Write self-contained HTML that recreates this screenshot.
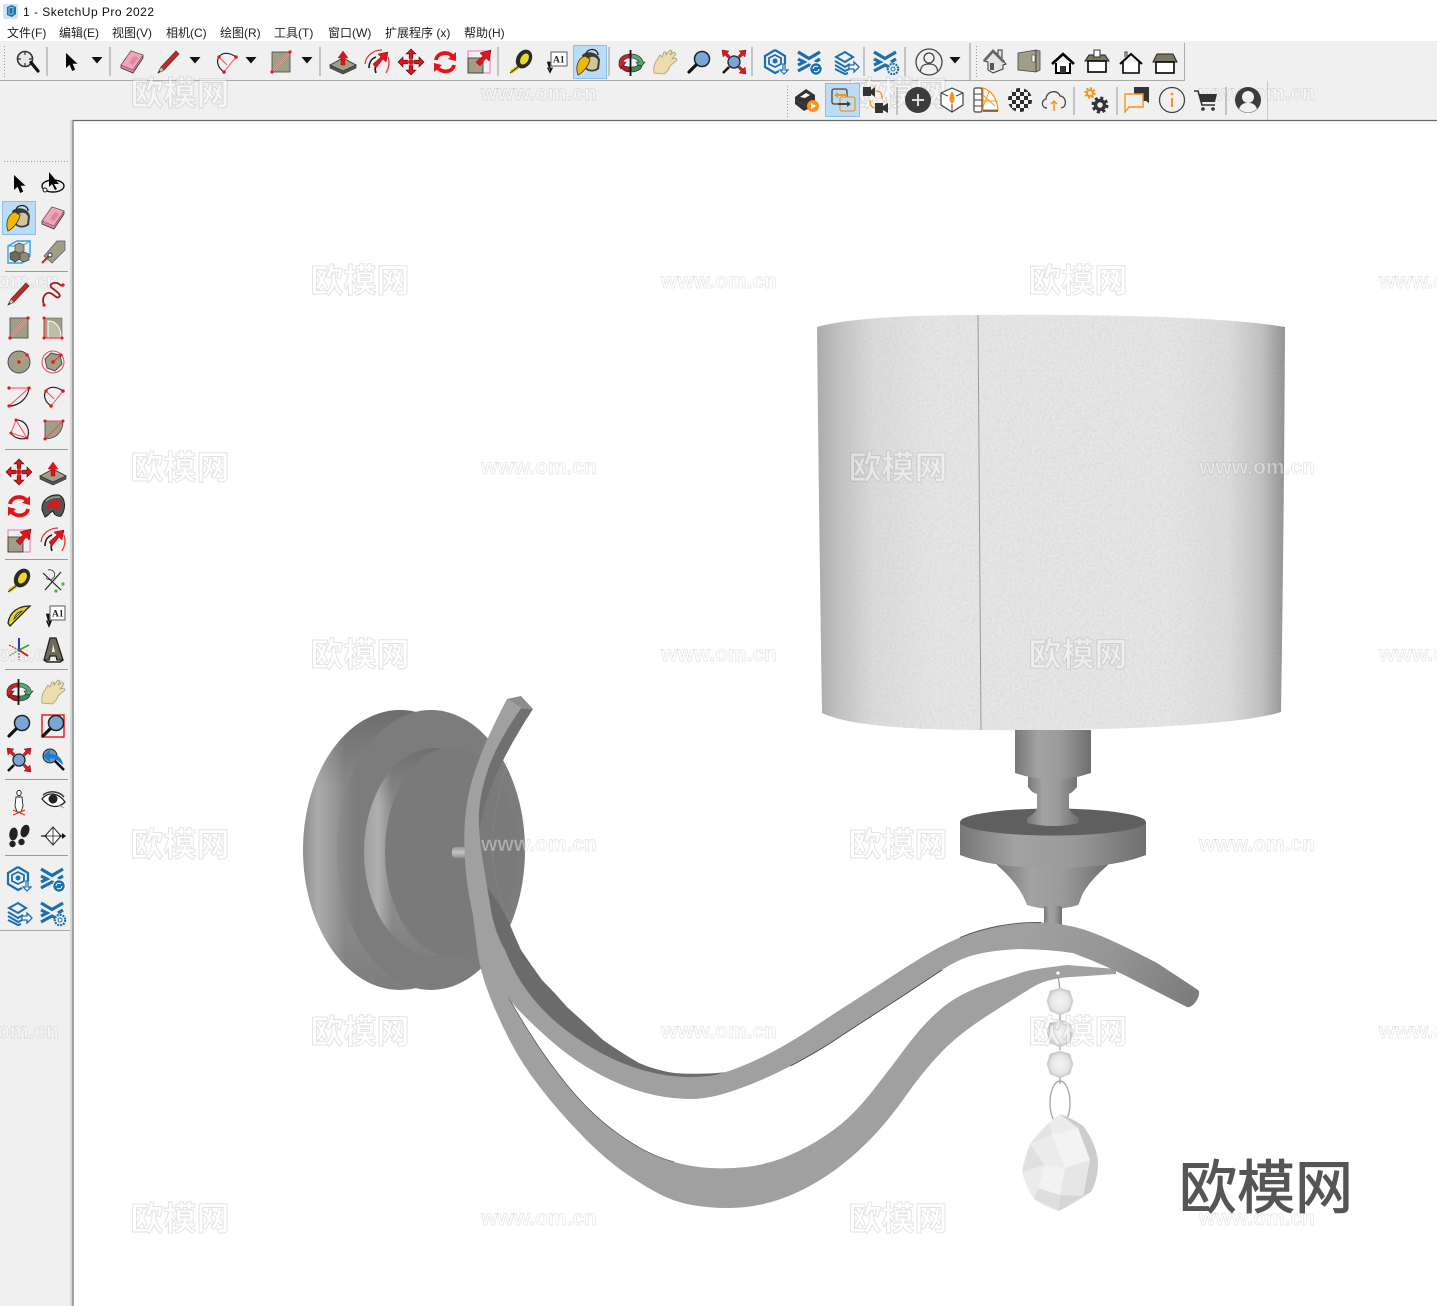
<!DOCTYPE html>
<html lang="zh-CN">
<head>
<meta charset="utf-8">
<title>1 - SketchUp Pro 2022</title>
<style>
html,body{margin:0;padding:0;background:#fff;width:1437px;height:1306px;overflow:hidden}
svg{display:block}
.menu{font:12px "Liberation Sans","Noto Sans CJK SC",sans-serif;fill:#222}
.wc{font:700 33px "Liberation Sans","Noto Sans CJK SC",sans-serif;fill:rgba(255,255,255,.4);stroke:rgba(0,0,0,.11);stroke-width:1;text-anchor:middle}
.we{font:700 21px "Liberation Sans",sans-serif;fill:rgba(255,255,255,.4);stroke:rgba(0,0,0,.09);stroke-width:.9;text-anchor:middle}
</style>
</head>
<body>
<svg xmlns="http://www.w3.org/2000/svg" width="1437" height="1306" viewBox="0 0 1437 1306">
<defs>
<linearGradient id="shade" gradientUnits="userSpaceOnUse" x1="817" x2="1285" y1="0" y2="0">
<stop offset="0" stop-color="#a9a9a9"/><stop offset=".05" stop-color="#c2c2c2"/><stop offset=".12" stop-color="#dbdbdb"/><stop offset=".25" stop-color="#e6e6e6"/><stop offset=".75" stop-color="#e6e6e6"/><stop offset=".88" stop-color="#dcdcdc"/><stop offset=".95" stop-color="#c0c0c0"/><stop offset="1" stop-color="#8f8f8f"/>
</linearGradient>
<filter id="noise" x="0" y="0" width="100%" height="100%">
<feTurbulence type="fractalNoise" baseFrequency="0.4" numOctaves="2" seed="4"/>
<feColorMatrix values="0 0 0 0 .5 0 0 0 0 .5 0 0 0 0 .5 .5 0 0 0 -.17"/>
<feComposite in2="SourceAlpha" operator="in"/>
</filter>
<pattern id="chk" patternUnits="userSpaceOnUse" width="8" height="8" x="-12" y="-12"><rect width="8" height="8" fill="#f4f4f4"/><rect width="4" height="4" fill="#2e2e2e"/><rect x="4" y="4" width="4" height="4" fill="#2e2e2e"/></pattern>
<linearGradient id="cyl" gradientUnits="objectBoundingBox" x1="0" x2="1" y1="0" y2="0">
<stop offset="0" stop-color="#777"/><stop offset=".3" stop-color="#a2a2a2"/><stop offset=".6" stop-color="#9a9a9a"/><stop offset="1" stop-color="#6f6f6f"/>
</linearGradient>
<linearGradient id="band" gradientUnits="userSpaceOnUse" x1="303" x2="345" y1="0" y2="0">
<stop offset="0" stop-color="#8e8e8e"/><stop offset=".35" stop-color="#ababab"/><stop offset=".7" stop-color="#9a9a9a"/><stop offset="1" stop-color="#888"/>
</linearGradient>
<linearGradient id="front" gradientUnits="userSpaceOnUse" x1="337" x2="355" y1="0" y2="0">
<stop offset="0" stop-color="#8e8e8e"/><stop offset="1" stop-color="#7c7c7c"/>
</linearGradient>
<linearGradient id="bandv" x1="0" x2="0" y1="0" y2="1">
<stop offset="0" stop-color="#000" stop-opacity=".2"/><stop offset=".28" stop-color="#000" stop-opacity="0"/><stop offset=".8" stop-color="#000" stop-opacity="0"/><stop offset="1" stop-color="#000" stop-opacity=".08"/>
</linearGradient>
<linearGradient id="ring" gradientUnits="userSpaceOnUse" x1="364" x2="392" y1="0" y2="0">
<stop offset="0" stop-color="#a0a0a0"/><stop offset=".5" stop-color="#b0b0b0"/><stop offset="1" stop-color="#8a8a8a"/>
</linearGradient>
<linearGradient id="armr" gradientUnits="userSpaceOnUse" x1="1030" y1="925" x2="1180" y2="1010">
<stop offset="0" stop-color="#a0a0a0"/><stop offset=".5" stop-color="#959595"/><stop offset="1" stop-color="#7d7d7d"/>
</linearGradient>
<linearGradient id="stub" x1="0" x2="0" y1="0" y2="1"><stop offset="0" stop-color="#9a9a9a"/><stop offset=".5" stop-color="#c4c4c4"/><stop offset="1" stop-color="#8e8e8e"/></linearGradient>
<radialGradient id="bead"><stop offset="0" stop-color="#f4f4f4"/><stop offset=".7" stop-color="#e6e6e6"/><stop offset="1" stop-color="#c4c4c4"/></radialGradient>

<g id="mg"><circle cx="-3" cy="-3" r="7.5" fill="#e8e8e8" stroke="#333" stroke-width="1.6"/><path d="M-3-11v4M-3 1v4M-11-3h4M1-3h4" stroke="#333" stroke-width="1.2"/><path d="M3-.5 L10 8" transform="translate(0,1)" stroke="#111" stroke-width="3.2" stroke-linecap="round"/></g>
<g id="sel"><path d="M-5-9V6l3.6-3.2L1.2 9l3-1.4-2.6-5.8H6.5z" fill="#050505"/></g>
<g id="ers"><path d="M-11 3 L-1-11 L11-7 L11-4 L1 11 L-11 6Z" fill="#ee7e9c" stroke="#333" stroke-width=".8"/><path d="M-11 3 L-1-11 L11-7 L1 8Z" fill="#f4a3b9" stroke="#555" stroke-width=".6"/><path d="M-3 1L2-6 6-4 1 3Z" fill="#d9899f"/></g>
<g id="pen"><path d="M-11 11 L-8 5 L7-11 L10-8 L-5 8Z" fill="#c9252b" stroke="#432" stroke-width=".7"/><path d="M-11 11 L-8 5 L-5 8Z" fill="#d5c49a" stroke="#432" stroke-width=".5"/><path d="M-11 11 L-10 8.500 L-8.500 10Z" fill="#222"/></g>
<g id="dd"><path d="M-5.5-3H5.5L0 3.5Z" fill="#111"/></g>
<g id="arc"><path d="M-2 10 C-16 0-5-16 10-5" fill="none" stroke="#222" stroke-width="1.2"/><path d="M-2 10 L10-5 M-7-5 L1 3" stroke="#f24a5a" fill="none"/><circle cx="-2" cy="10" r="1.8" fill="#e11"/><circle cx="10" cy="-5" r="1.8" fill="#e11"/><circle cx="-7" cy="-5" r="1.6" fill="#e11"/></g>
<g id="rc"><rect x="-9" y="-10" width="18" height="20" fill="#a19e88" stroke="#444" stroke-width=".8"/><path d="M-9 10 L9-10" stroke="#fff" stroke-width="1.6"/><path d="M-9 10 L9-10" stroke="#e22" stroke-width=".9"/><circle cx="-9" cy="10" r="1.6" fill="#e11"/><circle cx="9" cy="-10" r="1.6" fill="#e11"/></g>
<g id="pp"><path d="M-13 4 L0-3 L13 4 L0 10Z" fill="#a19e88" stroke="#333" stroke-width=".9"/><path d="M-13 4v3l13 6 13-6v-3l-13 6Z" fill="#555" stroke="#333" stroke-width=".6"/><path d="M-2 4V-3H-5L0-10 5-3H2V4Z" fill="#e5111b" stroke="#800" stroke-width=".4"/></g>
<g id="fol"><path d="M-12 2C-11-7-3-12 5-12" fill="none" stroke="#e33" stroke-width="1.3"/><path d="M11-5C13 1 12 6 9 11" fill="none" stroke="#e33" stroke-width="1.3"/><path d="M-8 6C-8-1-4-4-1-5M-1 11C-3 6-1 2 1 0" fill="none" stroke="#222" stroke-width="1.700"/><path d="M-4 2L4-5 1-8 11-10 9 0 6-3-1 6Z" fill="#e5111b" stroke="#800" stroke-width=".5"/></g>
<g id="mv"><g id="mv1"><path d="M0-13L5-8H1.800V-3.500H-1.800V-8H-5Z" fill="#e5111b" stroke="#311" stroke-width=".6"/></g><use href="#mv1" transform="rotate(90)"/><use href="#mv1" transform="rotate(180)"/><use href="#mv1" transform="rotate(270)"/><circle r="3" fill="#e5111b"/></g>
<g id="rot"><path d="M-9-2C-8-9 3-12 8-5" fill="none" stroke="#e5111b" stroke-width="3.8"/><path d="M11-10 L11-1 L3-3Z" fill="#e5111b"/><path d="M9 3C8 10-3 12-8 5" fill="none" stroke="#e5111b" stroke-width="3.8"/><path d="M-11 10 L-11 1 L-3 3Z" fill="#e5111b"/></g>
<g id="scl"><rect x="-11" y="-11" width="22" height="22" fill="none" stroke="#f08" stroke-opacity=".55"/><rect x="-11" y="-4" width="15" height="15" fill="#a19e88" stroke="#333" stroke-width=".8"/><path d="M-3 0L4-6 1-9 12-12 10-1 7-4 1 4Z" fill="#e5111b" stroke="#600" stroke-width=".5"/></g>
<g id="tape"><path d="M-10 10L-3 5" stroke="#d8c52a" stroke-width="3.8"/><path d="M-11 11L-3 5" stroke="#222" stroke-width=".8"/><ellipse cx="3" cy="-3" rx="7.500" ry="10" transform="rotate(30 3 -3)" fill="#2a2a2a"/><ellipse cx="3.500" cy="-3" rx="3.800" ry="6" transform="rotate(30 3.500 -3)" fill="#ecd927"/></g>
<g id="pnt"><path d="M-7-8C-1-13 9-11 11-3L10 6C5 10-2 9-4 5Z" fill="#3c3c36"/><path d="M-2-3C1-8 8-7 9-2L8 5C4 8-1 7-3 4Z" fill="#cfc59a"/><path d="M-4-7C-11-5-14 4-11 12-5 9 0 2 1-4Z" fill="#f0b800" stroke="#333" stroke-width=".8"/><path d="M-3-9A6 5 0 0 1 9-8" fill="none" stroke="#222" stroke-width="1.300"/></g>
<g id="orb"><path d="M-12 0C-12-6-6-9-1-9V-5C-5-5-8-3-8-1L-5-1-10 6-12 3Z" fill="#c9252b" stroke="#222" stroke-width=".6"/><path d="M-10 4C-8 8-4 9-1 9V4C-4 4-7 3-8 2Z" fill="#b01e23" stroke="#222" stroke-width=".6"/><path d="M0-9C6-9 11-6 12-1L14-1 9 5 5-1 8-1C7-3 4-5 0-5Z" fill="#58a872" stroke="#222" stroke-width=".6"/><path d="M0 9C5 9 10 7 11 3L7 2C5 4 3 4 0 4Z" fill="#3d8a58" stroke="#222" stroke-width=".6"/><path d="M-.5-13V13" stroke="#111" stroke-width="1.800"/></g>
<g id="pan"><path d="M-11 11C-12 5-10 0-8-2L-5-7 -3-5-1-10 1-10 1-7 5-12 7-11 5-7 9-10 11-8 7-3 11-4 12-2 5 4C4 8 2 10-1 12Z" fill="#eddcae" stroke="#a89a70" stroke-width=".8"/></g>
<g id="lens"><circle cx="3" cy="-3" r="7.5" fill="#7aa6d6" stroke="#222" stroke-width="1.5"/><path d="M-3 3L-10 10" stroke="#111" stroke-width="3.2" stroke-linecap="round"/></g>
<g id="ext"><path d="M-5 5L-11 11" stroke="#111" stroke-width="2.6"/><circle cx="0" cy="0" r="6" fill="#7aa6d6" stroke="#222" stroke-width="1.3"/><path d="M-12-12L-5-11-7-9-4-6-6-4-9-7-11-5Z M12-12L5-11 7-9 4-6 6-4 9-7 11-5Z M12 12L5 11 7 9 4 6 6 4 9 7 11 5Z" fill="#e5111b" stroke="#411" stroke-width=".4"/></g>
<g id="b1" fill="none" stroke="#1a6fb0" stroke-width="2.200"><path d="M-1-12L9-6V2M-1-12L-11-6V5L-1 11 3 9"/><path d="M-1-7L5-4V2L-1 5-7 2V-4Z" stroke-width="1.800"/><circle cx="-1" cy="-1" r="1.400"/><path d="M7 2V8H4L8 12 12 8H9V2Z" fill="#fff" stroke-width="1.200"/></g>
<g id="b2"><path d="M-12-10L-1-3.500 10-10M-12 9L-1 3 5 6M-12-3L-6 0-12 3M10-3L5 0" fill="none" stroke="#1a6fb0" stroke-width="3.200"/></g>
<g id="b2c"><use href="#b2"/><circle cx="6" cy="7" r="6.200" fill="#1a6fb0" stroke="#fff" stroke-width="1"/><path d="M3 7A3 3 0 0 1 8 5M9 7A3 3 0 0 1 4 9" fill="none" stroke="#fff"/></g>
<g id="b2g"><use href="#b2"/><circle cx="7" cy="7" r="5.200" fill="#f0f0f0" stroke="#1a6fb0" stroke-width="2.200" stroke-dasharray="2 1"/><circle cx="7" cy="7" r="2" fill="none" stroke="#1a6fb0"/></g>
<g id="b3"><path d="M-10-5L-1-10 7-5-1 0Z" fill="none" stroke="#1a6fb0" stroke-width="2"/><path d="M-11-1L-1 5 4 2M-11 3L-1 9 3 7M-11 7L-1 12 2 11" fill="none" stroke="#1a6fb0" stroke-width="2"/><path d="M3 3H8V0L13 5 8 10V7H3Z" fill="#fff" stroke="#1a6fb0" stroke-width="1.300"/></g>
<g id="usr"><circle r="13" fill="none" stroke="#444" stroke-width="1.3"/><circle cy="-4" r="5" fill="none" stroke="#444" stroke-width="1.3"/><path d="M-8.5 9C-8 3-4 2 0 2S8 3 8.5 9" fill="none" stroke="#444" stroke-width="1.3"/></g>
<g id="h1"><path d="M-11 0L-2-10 3-7V-11H7V-1L11 3 8 4V8L-2 12-7 9V1Z" fill="#e4e4e4" stroke="#333" stroke-width="1"/><path d="M-11 0L-2-10 9 1" fill="none" stroke="#666" stroke-width="2.800"/><rect x="-5" y="2" width="4" height="7" fill="#555"/></g>
<g id="h2"><path d="M-11-8L7-11 11-10V9L7 11-11 9Z" fill="#a19e88" stroke="#444" stroke-width=".8"/><path d="M7-11V11" stroke="#444"/><rect x="3" y="-6" width="3" height="7" fill="#fff" stroke="#444" stroke-width=".6"/></g>
<g id="h3"><path d="M-11 1L0-9 11 1" fill="none" stroke="#000" stroke-width="2.6"/><path d="M-7 0V10H7V0" fill="#fff" stroke="#000" stroke-width="2"/><rect x="-3" y="3" width="6" height="7" fill="#333"/></g>
<g id="h4"><path d="M-12-1L-8-7H8L12-1Z" fill="#7a7763" stroke="#222" stroke-width="1"/><rect x="-9" y="-1" width="18" height="11" fill="#fff" stroke="#000" stroke-width="1.6"/><rect x="-3" y="-12" width="6" height="7" fill="#fff" stroke="#333"/></g>
<g id="h5"><path d="M-11 1L0-9 11 1" fill="none" stroke="#000" stroke-width="2"/><path d="M-8-1V10H8V-1" fill="#fff" stroke="#000" stroke-width="1.6"/><path d="M-6-6V-11H-4V-6" stroke="#333" fill="none"/></g>
<g id="h6"><path d="M-12-1L-8-9H8L12-1Z" fill="#7a7763" stroke="#222" stroke-width="1"/><rect x="-9" y="-1" width="18" height="11" fill="#fff" stroke="#000" stroke-width="1.6"/></g>
<g id="r1"><path d="M-12-3L-1-11 8-5 8 1-1 6-12 0Z" fill="#333"/><path d="M-7-3L-1-7 3-5-2-2Z" fill="#fff"/><path d="M-12 0V4L-3 11 1 9V3L-1 6Z" fill="#333"/><circle cx="6" cy="6" r="6" fill="#f7931e"/><path d="M4 3L9 6 4 9Z" fill="#fff"/></g>
<g id="r2" fill="none" stroke-width="1.300"><rect x="-11" y="-11" width="15" height="15" rx="2" stroke="#444"/><rect x="-3" y="-3" width="15" height="14" rx="2" stroke="#f7931e" fill="#bcdcf5"/><path d="M-9-5L-5-8V-6H4V-4H-5V-2Z" fill="#f7931e" stroke="none"/><path d="M8 4L4 1V3H-5V5H4V7Z" fill="#444" stroke="none"/></g>
<g id="r3"><path d="M-13-13H-5V-10L-1-13V-3L-5-6V-4H-13Z" fill="#333"/><path d="M-1 3H7V6L12 3V13L7 10V13H-1Z" fill="#333"/><path d="M0-9C5-9 6-6 6-1M-6 0C-6 5-5 7-1 8" fill="none" stroke="#f7931e" stroke-width="1.300"/></g>
<g id="r4"><circle r="13" fill="#3c3c3c"/><path d="M0-6V6M-6 0H6" stroke="#ddd" stroke-width="2"/></g>
<g id="r5"><path d="M0-12L11-7V5L0 12-11 5V-7Z" fill="#fff" stroke="#444" stroke-width="1.200"/><path d="M0 4C-4 0-3-4 0-9 3-4 4 0 0 4Z" fill="#f7931e"/><path d="M-11-7L-4-4M11-7L4-4M0 4V12" stroke="#444"/></g>
<g id="r6"><rect x="-12" y="-12" width="8" height="24" rx="1.500" fill="#fff" stroke="#444" stroke-width="1.200"/><path d="M-12-6H-4M-12 0H-4M-12 6H-4" stroke="#444"/><path d="M-3-12C6-9 11-2 12 10H-3Z" fill="#fff" stroke="#f7931e" stroke-width="1.200"/><path d="M-3-5L9 6M3-8L-3 7M-3 1L11 1" stroke="#f7931e"/><path d="M-3 11H12" stroke="#444" stroke-width="1.400"/></g>
<g id="r7"><circle r="12" fill="url(#chk)"/></g>
<g id="r8"><path d="M-7 8C-13 8-13 0-8-1-8-9 4-11 6-4 12-4 14 7 7 8" fill="none" stroke="#444" stroke-width="1.300"/><path d="M0 11V1M-3 4L0 1 3 4" fill="none" stroke="#f7931e" stroke-width="1.500"/></g>
<g id="r9"><circle cx="-6" cy="-7" r="4.500" fill="none" stroke="#f7931e" stroke-width="2.500" stroke-dasharray="2 1.500"/><circle cx="-6" cy="-7" r="3" fill="none" stroke="#f7931e" stroke-width="2"/><circle cx="4" cy="5" r="7" fill="none" stroke="#333" stroke-width="3" stroke-dasharray="3 2.500"/><circle cx="4" cy="5" r="4.500" fill="none" stroke="#333" stroke-width="3.500"/></g>
<g id="r10"><path d="M-3-14H12V2L9 0H-3Z" fill="#333"/><path d="M-12-7H6V6H-8L-12 11Z" fill="#f0f0f0" stroke="#f7931e" stroke-width="1.400"/></g>
<g id="r11"><circle r="12.500" fill="none" stroke="#444" stroke-width="1.300"/><path d="M0-2V7" stroke="#f7931e" stroke-width="2"/><circle cy="-6" r="1.400" fill="#f7931e"/></g>
<g id="r12"><path d="M-12-9H-8L-4 5H9" fill="none" stroke="#333" stroke-width="1.600"/><path d="M-7-6H11L9 2H-5Z" fill="#333"/><circle cx="-3" cy="9" r="1.800" fill="#333"/><circle cx="7" cy="9" r="1.800" fill="#333"/></g>
<g id="r13"><circle r="13" fill="#3c3c3c"/><circle cy="-3" r="6" fill="#f0f0f0"/><path d="M-9 9C-7 3-3 3 0 3S7 3 9 9A13 13 0 0 1-9 9Z" fill="#f0f0f0"/></g>

<g id="os"><ellipse cy="3" rx="11" ry="6" fill="none" stroke="#111" stroke-width="1.400"/><circle cx="-8" cy="7" r="2" fill="#fff" stroke="#111"/><path d="M-4-11V4l3-3 3 6 2-1-3-5H6Z" fill="#050505"/></g>
<g id="cmp"><path d="M-11-6L-2-11H11V4L3 11H-11Z" fill="none" stroke="#2aa4ee" stroke-width="1.400"/><path d="M-11-6H3V11M3-6L11-11" fill="none" stroke="#2aa4ee"/><path d="M-9 1L-4-1 1 1V7L-4 10-9 7Z" fill="#6d6a58" stroke="#333" stroke-width=".6"/><path d="M1 2L5 0 10 2V8L5 10 1 8Z" fill="#8e8b74" stroke="#333" stroke-width=".6"/><path d="M-4-7L0-9 5-7V-1L0 1-4-1Z" fill="#a19e88" stroke="#333" stroke-width=".6"/></g>
<g id="tag"><path d="M-9 4L4-11 12-11 12-2-1 11Z" fill="#a19e88" stroke="#555" stroke-width=".7"/><path d="M-11 11L-3 3" stroke="#c9252b" stroke-width="2"/><circle cx="-3" cy="3" r="2" fill="#fff" stroke="#333"/></g>
<g id="fh"><path d="M-9 11C-12 3-7-2-3-1S3 5 6 3 3-3-1-6 0-12 4-11 7-7 10-9" fill="none" stroke="#9d1d22" stroke-width="1.800"/><circle cx="-9" cy="11" r="1.600" fill="#e11"/><circle cx="10" cy="-9" r="1.600" fill="#e11"/></g>
<g id="rr"><path d="M-9-10H9V10H-9Z" fill="#a19e88" stroke="#555" stroke-width=".5"/><path d="M-5-7C3-7 8-1 8 10H-5Z" fill="#c0bda6" stroke="#fff"/><path d="M-9-10V10H9" fill="none" stroke="#e22"/><circle cx="-9" cy="-10" r="1.500" fill="#e11"/><circle cx="-9" cy="10" r="1.500" fill="#e11"/><circle cx="9" cy="10" r="1.500" fill="#e11"/></g>
<g id="cir"><circle r="11" fill="#a19e88" stroke="#444" stroke-width=".9"/><path d="M0 0L8-7" stroke="#fff" stroke-width="1.300"/><path d="M0 0L8-7" stroke="#e22" stroke-width=".7"/><circle r="1.700" fill="#e11"/><circle cx="8" cy="-7" r="1.600" fill="#e11"/></g>
<g id="pol"><circle r="11" fill="none" stroke="#ee4454" stroke-width="1"/><path d="M-8-3L-2-9 7-7 9 2 2 9-6 6Z" fill="#a19e88" stroke="#444" stroke-width=".9"/><path d="M0 0L8-7" stroke="#e22"/><circle r="1.700" fill="#e11"/><circle cx="8" cy="-7" r="1.600" fill="#e11"/></g>
<g id="a1"><path d="M-10-8H10L-10 10" fill="none" stroke="#f46"/><path d="M-10 10C0 10 9 2 10-8" fill="none" stroke="#222" stroke-width="1.200"/><circle cx="-10" cy="-8" r="1.600" fill="#e11"/><circle cx="10" cy="-8" r="1.600" fill="#e11"/><circle cx="-10" cy="10" r="1.600" fill="#e11"/></g>
<g id="a3"><path d="M-3-10C8-10 12 2 8 8" fill="none" stroke="#222" stroke-width="1.200"/><path d="M-8 3C-5 8 2 10 8 8" fill="none" stroke="#222" stroke-width="1.200"/><path d="M-8 3L8 8 -3-10Z" fill="none" stroke="#f46"/><circle cx="-3" cy="-10" r="1.500" fill="#e11"/><circle cx="-8" cy="3" r="1.500" fill="#e11"/><circle cx="8" cy="8" r="1.500" fill="#e11"/></g>
<g id="pie"><path d="M-8 9V-9H10C10 2 3 9-8 9Z" fill="#a19e88" stroke="#333" stroke-width=".7"/><path d="M-8 9L10-9H-8" fill="none" stroke="#f46"/><circle cx="-8" cy="9" r="1.500" fill="#e11"/><circle cx="10" cy="-9" r="1.500" fill="#e11"/><circle cx="-8" cy="-9" r="1.500" fill="#e11"/></g>
<g id="off"><path d="M-11 4C-12-7-2-12 6-11 13-8 13 3 8 10 5 11 1 9 0 5-3 6-5 10-8 11Z" fill="#555" stroke="#222"/><path d="M-6 3C-7-2-1-7 6-6 8-3 8 1 5 4 3 1 0 0-6 3Z" fill="#d61a1f"/><path d="M-7-5C-3-9 3-9 7-9" stroke="#a19e88" stroke-width="1.500" fill="none"/></g>
<g id="dim"><path d="M-10-8L8 9M8-9L-8 9" stroke="#222" stroke-width="1.200"/><path d="M-5-11A5 5 0 1 1-7-3" fill="none" stroke="#333" stroke-width=".8"/><circle cx="10" cy="3" r="1.600" fill="#2c2"/><circle cx="3" cy="10" r="1.600" fill="#2c2"/></g>
<g id="pro"><path d="M-11 7C-9-5 0-10 11-10L-9 10Z" fill="#e8d320" stroke="#222" stroke-width="1.300"/><path d="M-5 3C-4-1-1-4 3-5Z" fill="#f0f0f0" stroke="#222" stroke-width=".8"/></g>
<g id="axs"><path d="M0 0V-12" stroke="#1a3fc8" stroke-width="2"/><path d="M0 0L-10-5" stroke="#c22" stroke-width="1.200" stroke-dasharray="2 1"/><path d="M0 0L10-5" stroke="#2a2" stroke-width="1.600"/><path d="M0 0L9 6" stroke="#d11" stroke-width="1.800"/><path d="M0 0L-10 6" stroke="#2a2" stroke-width="1" stroke-dasharray="2 1"/><path d="M0 0V10" stroke="#449" stroke-width="1" stroke-dasharray="2 1"/></g>
<g id="t3"><path d="M-9 10L-3-12H3L10 10H4L3 6H-3L-4 10Z" fill="#6d6a58" stroke="#222" stroke-width="1.300"/><path d="M-1 2H2L0-6Z" fill="#eee"/><path d="M-9 10L-6 12H7L10 10" fill="none" stroke="#222" stroke-width="1.400"/></g>
<g id="mw"><rect x="-11" y="-11" width="22" height="22" fill="none" stroke="#e5111b" stroke-width="1.400"/><use href="#lens"/></g>
<g id="prv"><circle cx="-3" cy="-4" r="7" fill="#6c93c7" stroke="#222"/><path d="M-10-4L-3-10V-6C5-6 9-2 10 5L5 1C3-1 0-2-3-2V2Z" fill="#1f7cd1"/><path d="M2 1L11 10" stroke="#111" stroke-width="2.600"/></g>
<g id="wlk"><ellipse cy="-9" rx="2.200" ry="2.600" fill="#fff" stroke="#222"/><path d="M-3-5H3L4 4 2 10H-2L-4 4Z" fill="#fff" stroke="#222" stroke-width=".9"/><path d="M-6 8L6 13M6 8L-6 13" stroke="#e22"/></g>
<g id="eye"><path d="M-11-3C-5-11 6-9 12 0 6 6-3 7-11-3Z" fill="#fff" stroke="#222" stroke-width="1.300"/><circle cy="-3" r="4.500" fill="#222"/><path d="M-10-7C-4-12 6-11 11-5" fill="none" stroke="#333" stroke-width="1.400"/><path d="M5 3L11 6" stroke="#aaa"/></g>
<g id="ft"><ellipse cx="-5.500" cy="-2" rx="4.200" ry="6.500" transform="rotate(8 -5.500 -2)" fill="#222"/><ellipse cx="-6.500" cy="8" rx="3.200" ry="3.200" fill="#222"/><ellipse cx="6" cy="-5" rx="4.200" ry="6.500" transform="rotate(20 6 -5)" fill="#222"/><ellipse cx="2.500" cy="6" rx="3.200" ry="3.200" fill="#222"/></g>
<g id="sec"><path d="M-8 0L0-9 8 0 0 9Z" fill="#fff" stroke="#222" stroke-width="1"/><path d="M-12 0H-6M6 0H12" stroke="#111" stroke-width="1.300"/><path d="M0-9V9M-8 0H8" stroke="#222" stroke-width=".8"/><path d="M9-3L13 0 9 3Z" fill="#111"/></g>
</defs>

<!-- page background -->
<rect width="1437" height="1306" fill="#fff"/>
<rect x="0" y="41" width="1437" height="79" fill="#f0f0f0"/>
<rect x="0" y="120" width="73" height="1186" fill="#f0f0f0"/>

<!-- lamp: shade -->
<path d="M817 327 C845 319 900 315 978 315 C1080 314 1220 316 1285 327 Q1284 520 1281 712 C1240 725 1120 731 980 730 C900 730 845 724 822 713 Q819 520 817 327Z" fill="url(#shade)"/>
<path d="M817 327 C845 319 900 315 978 315 C1080 314 1220 316 1285 327 Q1284 520 1281 712 C1240 725 1120 731 980 730 C900 730 845 724 822 713 Q819 520 817 327Z" fill="#000" filter="url(#noise)"/>
<path d="M978 315 L981 730" stroke="#9a9a9a" stroke-width="1"/>

<!-- stem -->
<path d="M997 855H1108V865Q1090 880 1082 895Q1079 904 1078 905Q1053 913 1027 905Q1020 885 997 865Z" fill="url(#cyl)"/>
<rect x="1044" y="906" width="18" height="20" rx="2" fill="url(#cyl)"/>
<path d="M960 822V855C985 865 1020 868 1053 868C1086 868 1121 865 1146 855V822Z" fill="url(#cyl)"/>
<ellipse cx="1053" cy="822" rx="93" ry="13.500" fill="#5f5f5f"/>
<path d="M1028 770H1077V787Q1072 793 1069 794V808Q1071 814 1079 818V823Q1053 829 1027 823V818Q1035 814 1037 808V794Q1032 793 1028 787Z" fill="url(#cyl)"/>
<path d="M1015 730H1091V773Q1053 786 1015 773Z" fill="url(#cyl)"/>

<!-- wall mount -->
<ellipse cx="400" cy="850" rx="97" ry="140" fill="url(#band)"/>
<ellipse cx="400" cy="850" rx="97" ry="140" fill="url(#bandv)"/>
<ellipse cx="431" cy="850" rx="94" ry="140" fill="url(#front)"/>
<ellipse cx="435" cy="852" rx="71" ry="104" fill="url(#ring)"/>
<ellipse cx="435" cy="852" rx="71" ry="104" fill="url(#bandv)"/>
<ellipse cx="451" cy="852" rx="66" ry="104" fill="#7a7a7a"/>
<path d="M507 763Q490 820 493 860Q496 890 508 917" fill="none" stroke="#9a9a9a" stroke-width=".7" stroke-dasharray="1 2"/>
<rect x="452" y="847" width="18" height="11" rx="4" fill="url(#stub)"/>

<!-- lower ribbon -->
<path d="M471 900 L478 955 Q481 973 488.500 993 Q496 1013 508.500 1038 Q521 1063 540.500 1088 Q560 1113 581.500 1135 Q603 1157 621 1170 Q639 1183 656.500 1192.500 Q674 1202 692 1205 Q710 1208 728 1208 Q746 1208 763.500 1204 Q781 1200 799 1191.500 Q817 1183 835 1170 Q853 1157 871 1138.500 Q889 1120 906.500 1095 Q924 1070 942 1051.500 Q960 1033 990 1014 Q1020 995 1032 987.500 Q1044 980 1064 977.500 L1116 974 L1116 969 L1067 965 Q1034 969 1027 971 Q1020 973 990 983 Q960 993 942 1008 Q924 1023 906.500 1046.500 Q889 1070 874.500 1088.500 Q860 1107 847.500 1118.500 Q835 1130 817 1141 Q799 1152 781.500 1158.500 Q764 1165 746 1167 Q728 1169 710 1168 Q692 1167 674 1162 Q656 1157 638.500 1147 Q621 1137 603 1122 Q585 1107 567 1085 Q549 1063 533 1038 Q517 1013 508 996.500 Q499 980 490 945 L480 900Z" fill="#a0a0a0"/>
<path d="M508 996.500 Q517 1013 533 1038 Q549 1063 567 1085 Q585 1107 603 1122 Q621 1137 638.500 1147 Q656 1157 674 1162" fill="none" stroke="#555" stroke-width=".7"/>

<!-- upper ribbon dark side -->
<path d="M487 887 Q500 905 508 920 Q514 935 521 950 Q531 965 542 980 Q555 993 567 1007 Q585 1023 603 1040 Q620 1052 639 1063 Q655 1070 674 1073 Q700 1075 728 1072 L700 1085 L600 1060 L540 1015 L495 950Z" fill="#6b6b6b"/>
<path d="M521 708 L533 709 Q503 755 490 790 Q482 812 479 830 Q478 790 497 743Z" fill="#707070"/>
<path d="M507 699 L521 696 L533 709 L521 708Z" fill="#8c8c8c"/>
<!-- upper ribbon light -->
<path d="M507 699 Q487 737 477 765 Q467 793 465 820 Q463 847 466.500 877 Q470 907 476 923.500 Q482 940 488 953.500 Q494 967 500 982 Q506 997 518.500 1010 Q531 1023 549 1039 Q567 1055 585 1066 Q603 1077 621 1084.500 Q639 1092 656.500 1095.500 Q674 1099 692 1099 Q710 1099 737 1089.500 Q764 1080 790.500 1066 Q817 1052 835 1040 Q853 1028 871 1016.500 Q889 1005 906.500 993.500 Q924 982 942 970 Q960 958 978 954 Q996 950 1020 949 Q1046.500 949 1073 953 Q1106 965 1140 983 L1187 1007 L1198 990 L1157 963 Q1107 937 1085 930 Q1063 923 1041 922.500 Q1020 922 999 926 Q978 930 960 937.500 Q942 945 924 956 Q906 967 888.500 978.500 Q871 990 853 1001.500 Q835 1013 817 1025 Q799 1037 781.500 1047 Q764 1057 746 1064.500 Q728 1072 715 1075 Q703 1077 688.500 1077 Q674 1077 656.500 1073.500 Q639 1070 621 1062.500 Q603 1055 585 1043.500 Q567 1032 553 1019.500 Q539 1007 526.500 990 Q514 973 505 950 Q496 935 491.500 913 Q487 887 482.500 858.500 Q478 830 479 811.500 Q480 793 488.500 768 Q497 743 521 708Z" fill="#a0a0a0"/>
<path d="M1020 949 Q1046.500 949 1073 953 Q1106 965 1140 983 L1187 1007 L1198 990 L1157 963 Q1107 937 1085 930 Q1063 923 1041 922.500 L1020 923Z" fill="url(#armr)"/>
<ellipse cx="1192.500" cy="998.500" rx="4.500" ry="10" transform="rotate(33 1192.500 998.500)" fill="#7c7c7c"/>
<path d="M790.500 1066 Q817 1052 835 1040 Q853 1028 871 1016.500 Q889 1005 906.500 993.500 Q924 982 942 970" fill="none" stroke="#444" stroke-width=".8"/>
<path d="M960 937.500 Q978 930 999 926 Q1020 922 1041 922.500" fill="none" stroke="#555" stroke-width=".9"/>

<!-- crystals -->
<path d="M1058 975 L1060 990 M1060 1014 V1020 M1060 1046 V1050 M1060 1076 V1084" stroke="#999" stroke-width="1.200" fill="none"/>
<circle cx="1058" cy="973" r="2.300" fill="#fff" stroke="#999"/>
<g stroke="#d0d0d0" stroke-width=".5">
<path d="M1050 991 L1060 988 L1070 991 L1073 1001 L1070 1011 L1060 1015 L1050 1011 L1047 1001Z" fill="url(#bead)"/>
<path d="M1050 1023 L1060 1020 L1070 1023 L1073 1033 L1070 1043 L1060 1047 L1050 1043 L1047 1033Z" fill="url(#bead)"/>
<path d="M1050 1054 L1060 1051 L1070 1054 L1073 1064 L1070 1074 L1060 1078 L1050 1074 L1047 1064Z" fill="url(#bead)"/>
</g>
<ellipse cx="1060" cy="1103" rx="10" ry="22" fill="none" stroke="#aaa" stroke-width="1.400"/>
<path d="M1060 1114 Q1076 1120 1084 1127 Q1096 1144 1098 1161 Q1098 1180 1091 1192 Q1075 1204 1059 1211 Q1044 1207 1034 1199 Q1025 1186 1022 1172 Q1024 1156 1030 1144 Q1040 1130 1050 1122Z" fill="#ececec"/>
<path d="M1060 1114 Q1076 1120 1084 1127 Q1096 1144 1098 1161 Q1098 1180 1091 1192 L1083 1196 L1090 1160 L1078 1128Z" fill="#cdcdcd"/>
<path d="M1030 1144 L1052 1135 L1050 1122Z" fill="#e4e4e4"/>
<path d="M1022 1172 L1030 1144 L1045 1165Z" fill="#e0e0e0"/>
<path d="M1052 1135 L1078 1128 L1090 1160 L1065 1168Z" fill="#f3f3f3"/>
<path d="M1045 1165 L1065 1168 L1060 1195 L1038 1188Z" fill="#f2f2f2"/>
<path d="M1065 1168 L1090 1160 L1083 1196 L1060 1195Z" fill="#e6e6e6"/>
<path d="M1022 1172 L1045 1165 L1038 1188 L1034 1199Z" fill="#ebebeb"/>
<path d="M1034 1199 L1038 1188 L1060 1195 L1059 1211Z" fill="#dedede"/>
<path d="M1060 1195 L1083 1196 L1091 1192 L1059 1211Z" fill="#d6d6d6"/>

<!-- big logo -->
<text x="1179" y="1208" font-family="'Liberation Sans','Noto Sans CJK SC',sans-serif" font-size="58" fill="#555" stroke="#555" stroke-width="1" stroke-linejoin="round">欧模网</text>

<!-- second toolbar background and borders -->
<rect x="782" y="81" width="485" height="39" fill="#f0f0f0"/>
<path d="M1267.500 81V120" stroke="#c8c8c8"/>
<path d="M0 80.500H1184.500V43" fill="none" stroke="#ababab"/>
<path d="M73 1306V120.500H1437" fill="none" stroke="#6b6b6b" stroke-width="1.200"/>
<path d="M0 930.500H70" stroke="#a8a8a8"/>
<path d="M71 120V1306" stroke="#bdbdbd"/>

<!-- watermarks -->
<g>
<text class="wc" x="180" y="105">欧模网</text><text class="wc" x="898" y="105">欧模网</text>
<text class="wc" x="360" y="292">欧模网</text><text class="wc" x="1078" y="292">欧模网</text>
<text class="wc" x="180" y="479">欧模网</text><text class="wc" x="898" y="479">欧模网</text>
<text class="wc" x="360" y="666">欧模网</text><text class="wc" x="1078" y="666">欧模网</text>
<text class="wc" x="180" y="856">欧模网</text><text class="wc" x="898" y="856">欧模网</text>
<text class="wc" x="360" y="1043">欧模网</text><text class="wc" x="1078" y="1043">欧模网</text>
<text class="wc" x="180" y="1230">欧模网</text><text class="wc" x="898" y="1230">欧模网</text>
<text class="we" x="539" y="100">www.om.cn</text><text class="we" x="1257" y="100">www.om.cn</text>
<text class="we" x="1" y="288">www.om.cn</text><text class="we" x="719" y="288">www.om.cn</text><text class="we" x="1437" y="288">www.om.cn</text>
<text class="we" x="539" y="474">www.om.cn</text><text class="we" x="1257" y="474">www.om.cn</text>
<text class="we" x="1" y="661">www.om.cn</text><text class="we" x="719" y="661">www.om.cn</text><text class="we" x="1437" y="661">www.om.cn</text>
<text class="we" x="539" y="851">www.om.cn</text><text class="we" x="1257" y="851">www.om.cn</text>
<text class="we" x="1" y="1038">www.om.cn</text><text class="we" x="719" y="1038">www.om.cn</text><text class="we" x="1437" y="1038">www.om.cn</text>
<text class="we" x="539" y="1225">www.om.cn</text><text class="we" x="1257" y="1225">www.om.cn</text>
</g>

<!-- title bar -->
<rect x="3" y="4" width="15" height="15" rx="2" fill="#cfe3f4"/>
<path d="M7 7L12 5 16 7V14L12 17 7 15Z" fill="#1f6fa8"/>
<path d="M9 8L13 7V14L9 14Z" fill="none" stroke="#bde" stroke-width=".8"/>
<text x="23" y="16" font-family="'Liberation Sans',sans-serif" font-size="12" fill="#111" textLength="131" lengthAdjust="spacing">1 - SketchUp Pro 2022</text>
<text class="menu" x="7" y="37">文件(F)</text>
<text class="menu" x="59" y="37">编辑(E)</text>
<text class="menu" x="112" y="37">视图(V)</text>
<text class="menu" x="166" y="37">相机(C)</text>
<text class="menu" x="220" y="37">绘图(R)</text>
<text class="menu" x="274" y="37">工具(T)</text>
<text class="menu" x="328" y="37">窗口(W)</text>
<text class="menu" x="385" y="37">扩展程序 (x)</text>
<text class="menu" x="464" y="37">帮助(H)</text>

<!-- grippers -->
<g stroke="#9a9a9a" stroke-dasharray="1 2" fill="none">
<path d="M4.500 46V78"/><path d="M976.500 46V78"/><path d="M787.500 86V118"/><path d="M4 161.500H70"/>
</g>

<!-- top toolbar separators -->
<path d="M47 47V76M110 47V76M320 47V76M498 47V76M609 47V76M752 47V76M864 47V76M905 47V76M970 43V80M897 87V115M1074 87V115M1117 87V115M1226 87V115" stroke="#999" fill="none"/>

<!-- selected -->
<rect x="573.500" y="45.500" width="33" height="33" fill="#bcdcf5" stroke="#8cc0ec"/>
<rect x="825.500" y="83.500" width="34" height="33" fill="#bcdcf5" stroke="#8cc0ec"/>

<!-- toolbar row 1 -->
<use href="#mg" x="28" y="62"/><use href="#sel" x="71" y="62"/><use href="#dd" x="97" y="60"/>
<use href="#ers" x="132" y="62"/><use href="#pen" x="169" y="62"/><use href="#dd" x="195" y="60"/>
<use href="#arc" x="226" y="62"/><use href="#dd" x="251" y="60"/><use href="#rc" x="281" y="62"/><use href="#dd" x="307" y="60"/>
<use href="#pp" x="343" y="61"/><use href="#fol" x="377" y="62"/><use href="#mv" x="411" y="62"/><use href="#rot" x="445" y="62"/><use href="#scl" x="479" y="62"/>
<use href="#tape" x="521" y="62"/>
<path d="M547 62H550V72M547.500 68L550 73 552.500 68Z" fill="#111" stroke="#111" stroke-width=".7"/>
<rect x="551" y="52" width="16" height="14" fill="#fff" stroke="#333" stroke-width=".8"/>
<text x="553" y="62.500" font-family="'Liberation Serif',serif" font-size="9.500" font-weight="700" fill="#222">A1</text>
<use href="#pnt" x="589" y="63"/><use href="#orb" x="631" y="63"/><use href="#pan" x="665" y="62"/><use href="#lens" x="699" y="62"/><use href="#ext" x="734" y="62"/>
<use href="#b1" x="776" y="62"/><use href="#b2c" x="810" y="62"/><use href="#b3" x="846" y="62"/><use href="#b2g" x="886" y="62"/>
<use href="#usr" x="929" y="62"/><use href="#dd" x="955" y="60"/>
<use href="#h1" x="995" y="61"/><use href="#h2" x="1029" y="61"/><use href="#h3" x="1063" y="63"/><use href="#h4" x="1097" y="62"/><use href="#h5" x="1131" y="63"/><use href="#h6" x="1165" y="63"/>

<!-- toolbar row 2 -->
<use href="#r1" x="807" y="100"/><use href="#r2" x="843" y="100"/><use href="#r3" x="876" y="100"/><use href="#r4" x="918" y="100"/><use href="#r5" x="952" y="100"/><use href="#r6" x="986" y="100"/><use href="#r7" x="1020" y="100"/><use href="#r8" x="1054" y="100"/><use href="#r9" x="1096" y="100"/><use href="#r10" x="1137" y="101"/><use href="#r11" x="1172" y="100"/><use href="#r12" x="1206" y="100"/><use href="#r13" x="1248" y="100"/>

<!-- left toolbar separators -->
<path d="M5 271.500H68M5 449.500H68M5 559.500H68M5 669.500H68M5 779.500H68M5 855.500H68" stroke="#999" fill="none"/>
<rect x="2.500" y="201.500" width="33" height="33" fill="#bcdcf5" stroke="#8cc0ec"/>

<!-- left toolbar icons -->
<use href="#sel" x="19" y="184"/><use href="#os" x="53" y="183"/>
<use href="#pnt" x="19" y="219"/><use href="#ers" x="53" y="218"/>
<use href="#cmp" x="19" y="252"/><use href="#tag" x="53" y="252"/>
<use href="#pen" x="19" y="294"/><use href="#fh" x="53" y="294"/>
<use href="#rc" x="19" y="328"/><use href="#rr" x="53" y="328"/>
<use href="#cir" x="19" y="362"/><use href="#pol" x="53" y="362"/>
<use href="#a1" x="19" y="396"/><use href="#arc" x="53" y="396"/>
<use href="#a3" x="19" y="430"/><use href="#pie" x="53" y="430"/>
<use href="#mv" x="19" y="472"/><use href="#pp" x="53" y="472"/>
<use href="#rot" x="19" y="506"/><use href="#off" x="53" y="506"/>
<use href="#scl" x="19" y="541"/><use href="#fol" x="53" y="540"/>
<use href="#tape" x="19" y="581"/><use href="#dim" x="53" y="581"/>
<use href="#pro" x="19" y="616"/>
<path d="M46 614H49V625M46.500 621L49 627 51.500 621Z" fill="#111" stroke="#111" stroke-width=".7"/>
<rect x="50" y="606" width="15" height="14" fill="#fff" stroke="#333" stroke-width=".8"/>
<text x="52" y="616.500" font-family="'Liberation Serif',serif" font-size="9.500" font-weight="700" fill="#222">A1</text>
<use href="#axs" x="19" y="650"/><use href="#t3" x="53" y="650"/>
<use href="#orb" x="19" y="692"/><use href="#pan" x="53" y="692"/>
<use href="#lens" x="19" y="726"/><use href="#mw" x="53" y="726"/>
<use href="#ext" x="19" y="760"/><use href="#prv" x="53" y="760"/>
<use href="#wlk" x="19" y="802"/><use href="#eye" x="53" y="802"/>
<use href="#ft" x="19" y="836"/><use href="#sec" x="53" y="836"/>
<use href="#b1" x="19" y="879"/><use href="#b2c" x="53" y="879"/>
<use href="#b3" x="19" y="913"/><use href="#b2g" x="53" y="913"/>
</svg>
</body>
</html>
